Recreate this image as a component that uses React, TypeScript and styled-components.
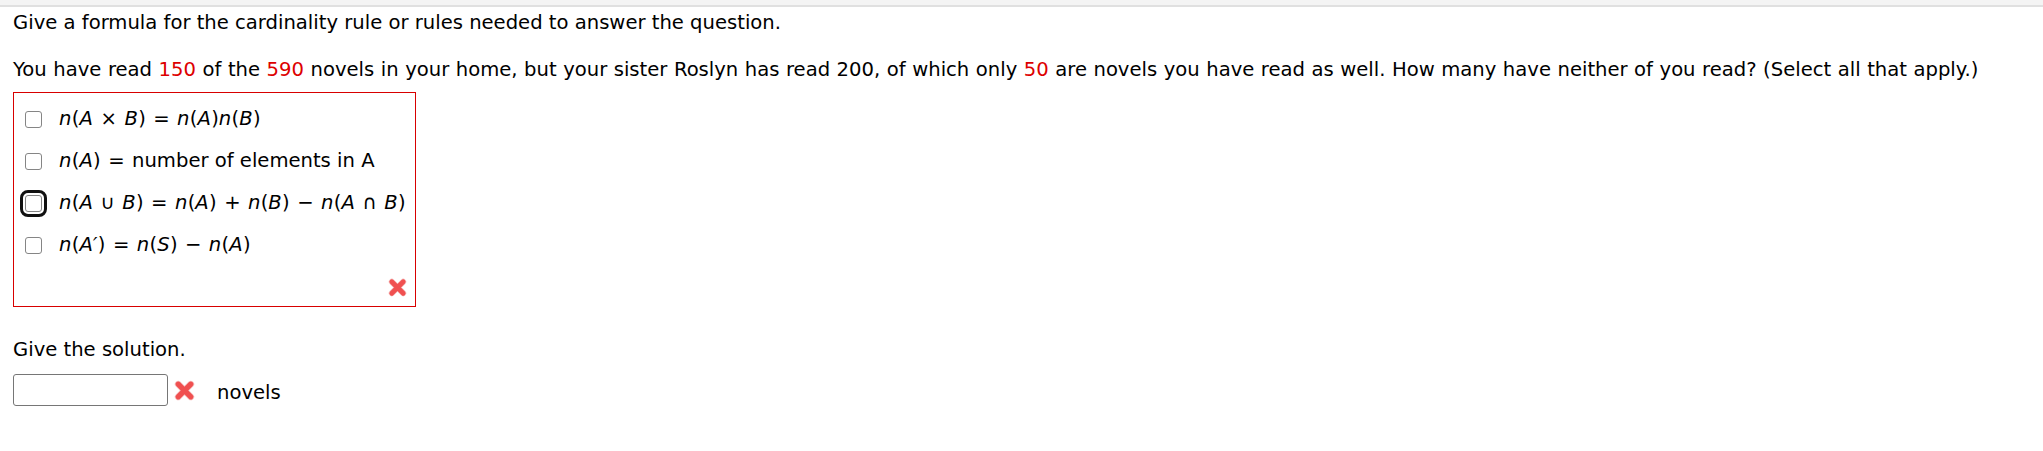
import React from "react";
import styled, { createGlobalStyle } from "styled-components";

const GlobalStyle = createGlobalStyle`
  html, body { margin: 0; padding: 0; background: #fff; }
  body { font-family: "DejaVu Sans", Verdana, sans-serif; color: #000; }
`;

const TopBar = styled.div`
  height: 5px;
  background: #f4f4f4;
  border-bottom: 2px solid #e0e0e0;
`;

const Content = styled.div`
  padding: 5px 0 0 13px;
  font-size: 19.6px;
  line-height: 22px;
`;

const Prompt = styled.p<{ $gap?: number; $wordGap?: number }>`
  margin: 0 0 ${(p) => p.$gap ?? 0}px 0;
  white-space: nowrap;
  word-spacing: ${(p) => p.$wordGap ?? 0}px;
`;

const Num = styled.span`
  color: #dd0000;
`;

const ChoiceBox = styled.div`
  box-sizing: border-box;
  width: 403px;
  border: 1px solid #d80000;
  padding: 5px 8px 9px 10px;
  margin-bottom: 32px;
`;

const ChoiceRow = styled.label`
  display: flex;
  align-items: center;
  height: 42px;
  gap: 17px;
`;

const Check = styled.span<{ $focused?: boolean }>`
  box-sizing: border-box;
  flex: none;
  width: 17px;
  height: 17px;
  margin-left: 1px;
  border: 1.5px solid #858585;
  border-radius: 3px;
  background: #fff;
  outline: ${(p) => (p.$focused ? "3px solid #111" : "none")};
  outline-offset: 2px;
`;

const MathText = styled.span`
  white-space: nowrap;
  word-spacing: 1.2px;
`;

const Plain = styled.span`
  word-spacing: 0;
`;

const V = styled.i`
  font-style: italic;
  letter-spacing: 0.3px;
`;

const BoxFooter = styled.div`
  display: flex;
  justify-content: flex-end;
  margin-top: 12px;
`;

const AnswerRow = styled.div`
  display: flex;
  align-items: center;
  margin-top: 13px;
`;

const AnswerInput = styled.input`
  box-sizing: border-box;
  width: 155px;
  height: 32px;
  border: 1px solid #767676;
  border-radius: 3px;
  margin: 0 6px 0 0;
  font: inherit;
`;

const Unit = styled.span`
  margin-left: 22px;
  margin-top: 6px;
`;

const XMark: React.FC<{ size?: number }> = ({ size = 19 }) => (
  <svg width={size} height={size} viewBox="0 0 20 20" aria-hidden="true">
    <path
      d="M4 4 L16 16 M16 4 L4 16"
      stroke="#f5c0c0"
      strokeWidth={6.4}
      strokeLinecap="round"
    />
    <path
      d="M4 4 L16 16 M16 4 L4 16"
      stroke="#f05050"
      strokeWidth={5}
      strokeLinecap="round"
    />
  </svg>
);

export default function App() {
  return (
    <>
      <GlobalStyle />
      <TopBar />
      <Content>
        <Prompt $gap={25}>
          Give a formula for the cardinality rule or rules needed to answer the question.
        </Prompt>
        <Prompt $gap={11} $wordGap={0.3}>
          You have read <Num>150</Num> of the <Num>590</Num> novels in your home, but your
          sister Roslyn has read 200, of which only <Num>50</Num> are novels you have read as
          well. How many have neither of you read? (Select all that apply.)
        </Prompt>
        <ChoiceBox>
          <ChoiceRow>
            <Check />
            <MathText>
              <V>n</V>(<V>A</V> × <V>B</V>) = <V>n</V>(<V>A</V>)<V>n</V>(<V>B</V>)
            </MathText>
          </ChoiceRow>
          <ChoiceRow>
            <Check />
            <MathText>
              <V>n</V>(<V>A</V>) = <Plain>number of elements in A</Plain>
            </MathText>
          </ChoiceRow>
          <ChoiceRow>
            <Check $focused />
            <MathText>
              <V>n</V>(<V>A</V> ∪ <V>B</V>) = <V>n</V>(<V>A</V>) + <V>n</V>(<V>B</V>) −{" "}
              <V>n</V>(<V>A</V> ∩ <V>B</V>)
            </MathText>
          </ChoiceRow>
          <ChoiceRow>
            <Check />
            <MathText>
              <V>n</V>(<V>A′</V>) = <V>n</V>(<V>S</V>) − <V>n</V>(<V>A</V>)
            </MathText>
          </ChoiceRow>
          <BoxFooter>
            <XMark />
          </BoxFooter>
        </ChoiceBox>
        <Prompt>Give the solution.</Prompt>
        <AnswerRow>
          <AnswerInput type="text" />
          <XMark size={21} />
          <Unit>novels</Unit>
        </AnswerRow>
      </Content>
    </>
  );
}
